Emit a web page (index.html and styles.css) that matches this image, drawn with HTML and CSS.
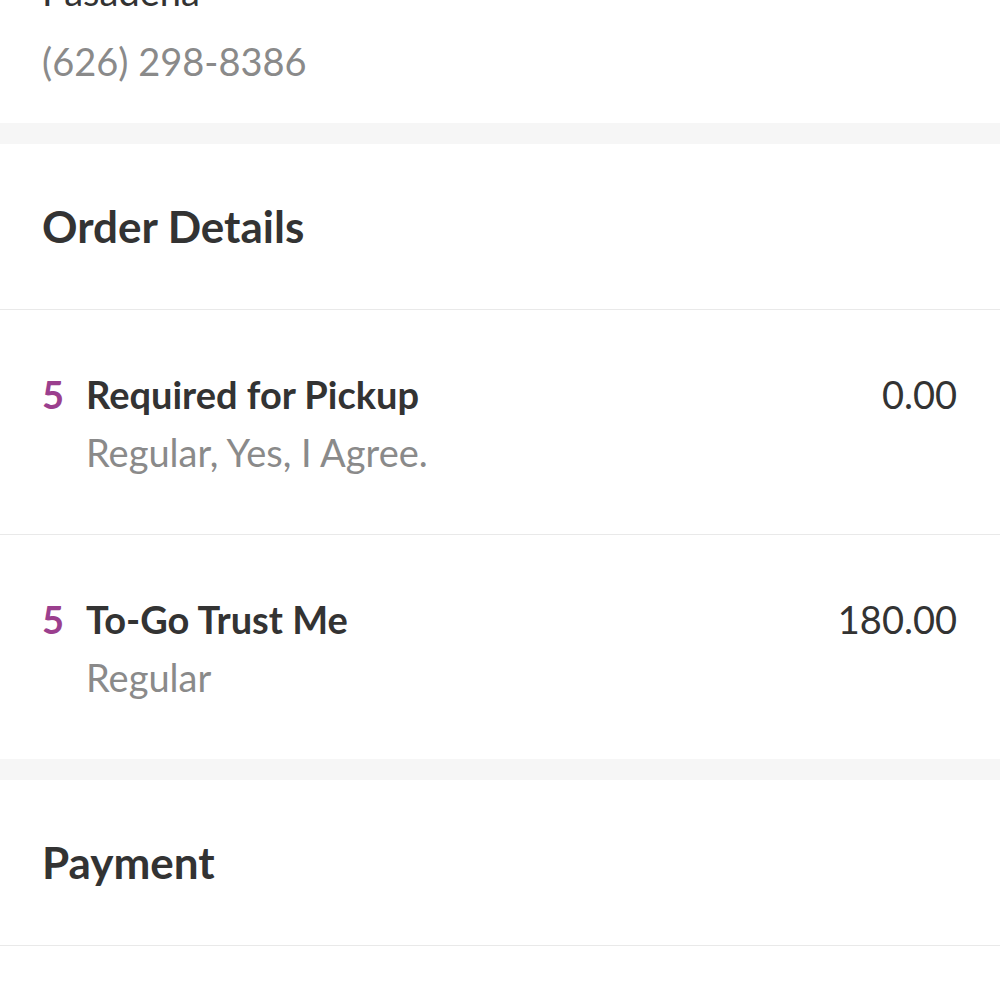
FILE: index.html
```html
<!DOCTYPE html>
<html>
<head>
<meta charset="utf-8">
<link rel="stylesheet" href="styles.css">
</head>
<body>
<div class="page">
  <section class="address">
    <div class="addr-line city">Pasadena</div>
    <div class="addr-line phone">(626) 298-8386</div>
  </section>
  <div class="band"></div>
  <section class="card">
    <h2 class="card-title">Order Details</h2>
    <div class="item">
      <span class="qty">5</span>
      <div class="item-info">
        <div class="item-name">Required for Pickup</div>
        <div class="item-sub">Regular, Yes, I Agree.</div>
      </div>
      <span class="price">0.00</span>
    </div>
    <div class="item">
      <span class="qty">5</span>
      <div class="item-info">
        <div class="item-name">To-Go Trust Me</div>
        <div class="item-sub">Regular</div>
      </div>
      <span class="price">180.00</span>
    </div>
  </section>
  <div class="band"></div>
  <section class="card">
    <h2 class="card-title">Payment</h2>
  </section>
</div>
</body>
</html>
```
FILE: styles.css
```css
html, body {
  margin: 0;
  padding: 0;
  background: #ffffff;
}
body {
  font-family: Lato, "Open Sans", sans-serif;
  color: #333333;
  overflow: hidden;
}
.page {
  margin-top: -37px;
}
.address {
  padding: 0 42px 34px;
  display: flex;
  flex-direction: column;
  gap: 14px;
}
.addr-line {
  font-size: 38px;
  line-height: 56px;
}
.city { color: #333333; }
.phone { color: #8a8a8a; }
.band {
  height: 21px;
  background: #f6f6f6;
}
.card-title {
  margin: 0;
  padding: 56px 42px;
  font-size: 44px;
  line-height: 53px;
  font-weight: 700;
  color: #333333;
  border-bottom: 1px solid #e9e9e9;
}
.item {
  display: flex;
  align-items: flex-start;
  padding: 55px 43px 53px 42px;
  border-bottom: 1px solid #e9e9e9;
  font-size: 38px;
  line-height: 58px;
}
.item:last-child { border-bottom: none; }
.qty {
  color: #9b3f8e;
  font-weight: 700;
  width: 44px;
  flex: none;
}
.item-info {
  flex: 1;
}
.item-name {
  font-weight: 700;
  color: #333333;
}
.item-sub {
  color: #8a8a8a;
}
.price {
  color: #333333;
}
```
